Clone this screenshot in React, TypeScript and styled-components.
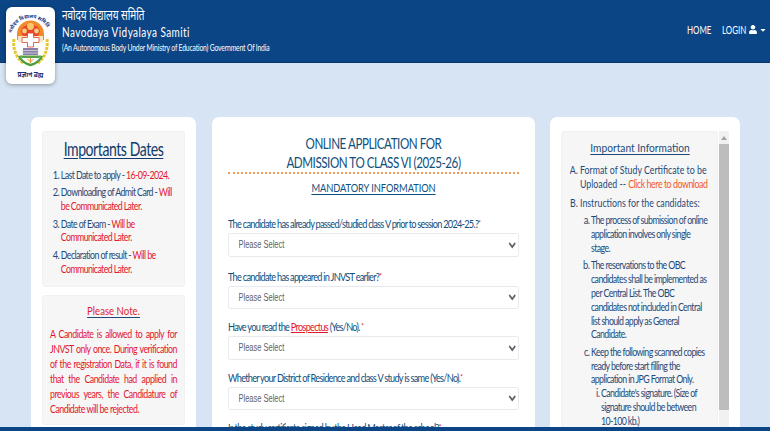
import React from "react";
import styled, { createGlobalStyle, css } from "styled-components";
import { FaUser, FaCaretDown } from "react-icons/fa";

const GlobalStyle = createGlobalStyle`
  html, body {
    margin: 0;
    padding: 0;
    height: 100%;
    overflow: hidden;
    background: #d6e4f3;
    font-family: Lato, "Noto Sans", sans-serif;
  }
  * { box-sizing: border-box; }
`;

// the site's type is narrow and tall, so text blocks get squeezed horizontally
const squeeze = (k: number) => css`
  width: ${100 / k}%;
  transform: scaleX(${k});
  transform-origin: left center;
`;

const Page = styled.div`
  height: 100vh;
  overflow: hidden;
`;

const Header = styled.header`
  height: 63px;
  background: #0b4585;
  border-bottom: 1px solid #083766;
  display: flex;
  justify-content: space-between;
  padding: 0 4px 0 62px;
  color: #fff;
`;

const LogoCard = styled.div`
  position: absolute;
  left: 6px;
  top: 7px;
  width: 49px;
  height: 77px;
  background: #fff;
  border-radius: 6px;
  box-shadow: 0 1px 4px rgba(0, 0, 0, 0.35);
`;

const Brand = styled.div`
  display: flex;
  flex-direction: column;
  padding-top: 5px;
  white-space: nowrap;
`;

const BrandHindi = styled.div`
  font-family: "Noto Sans", "Noto Sans Devanagari", sans-serif;
  font-size: 15px;
  line-height: 18px;
  transform: scaleX(0.66);
  transform-origin: left center;
`;

const BrandName = styled.div`
  font-size: 13px;
  line-height: 18px;
  letter-spacing: 0.55px;
  transform: scaleX(0.77);
  transform-origin: left center;
`;

const BrandSub = styled.div`
  font-size: 9px;
  line-height: 14px;
  letter-spacing: -0.2px;
  transform: scaleX(0.75);
  transform-origin: left center;
`;

const Nav = styled.nav`
  display: flex;
  align-items: center;
  gap: 11px;
  padding-bottom: 3px;
  font-size: 12px;
`;

const NavLink = styled.a`
  display: flex;
  align-items: center;
  gap: 3px;
  color: #fff;
`;

const NavText = styled.span`
  display: block;
  width: 24px;
  white-space: nowrap;
  transform: scaleX(0.66);
  transform-origin: left center;
`;

const UserIcon = styled(FaUser)`
  width: 8px;
  height: 11px;
`;

const CaretIcon = styled(FaCaretDown)`
  width: 6px;
  height: 8px;
`;

const Main = styled.main`
  display: grid;
  grid-template-columns: 165px 323px 190px;
  column-gap: 15.5px;
  padding: 54px 30px 0 31px;
  align-items: start;
`;

const Card = styled.section`
  background: #fff;
  border-radius: 7px;
  padding: 14px 11px;
  height: 400px;
`;

const FormCard = styled(Card)`
  padding: 14px 16px;
`;

const InfoCard = styled(Card)`
  display: flex;
  gap: 1px;
`;

const Panel = styled.div`
  background: #f6f6f7;
  border: 1px solid #f1f1f2;
  border-radius: 3px;
  color: #1f4a78;
  overflow: hidden;
`;

const DatesPanel = styled(Panel)`
  height: 156px;
  margin-bottom: 8px;
  padding: 5px 7px;
`;

const NotePanel = styled(Panel)`
  height: 130px;
  padding: 6px 7px;
`;

const InfoPanel = styled(Panel)`
  flex: 1;
  height: 400px;
  padding: 8px 7px 8px 8px;
`;

const BigTitle = styled.h2`
  ${squeeze(0.74)}
  margin: 0 0 7px;
  text-align: center;
  font-size: 19px;
  line-height: 24px;
  font-weight: 400;
  letter-spacing: -0.6px;
  color: #123b6b;
  text-decoration: underline;
  text-decoration-thickness: 1px;
  text-underline-offset: 2px;
`;

const NoteTitle = styled.h3`
  ${squeeze(0.8)}
  margin: 0 0 6px;
  text-align: center;
  font-size: 12px;
  line-height: 18px;
  font-weight: 400;
  color: #e01e2d;
  text-decoration: underline;
  text-decoration-color: #1f4a78;
  text-underline-offset: 2px;
`;

const InfoTitle = styled.h3`
  ${squeeze(0.85)}
  margin: 0 0 7px;
  text-align: center;
  font-size: 12px;
  line-height: 16px;
  font-weight: 400;
  color: #1f4a78;
  text-decoration: underline;
  text-underline-offset: 2px;
`;

const Squeezed = styled.div`
  ${squeeze(0.8)}
`;

const OrderedList = styled.ol<{
  $type?: string;
  $indent?: number;
  $tight?: boolean;
  $gap?: number;
  $top?: number;
}>`
  list-style-type: ${({ $type }) => $type || "decimal"};
  margin: ${({ $top }) => $top ?? 0}px 0 0;
  padding-left: ${({ $indent }) => $indent ?? 12.5}px;
  font-size: 11px;
  line-height: 13.8px;
  letter-spacing: ${({ $tight }) => ($tight ? "-0.75px" : "0")};

  & > li {
    margin-bottom: ${({ $gap }) => $gap ?? 3.6}px;
  }

  & > li::marker {
    font-size: ${({ $tight }) => ($tight ? "11.5px" : "11px")};
  }
`;

const Red = styled.span`
  color: #e4162b;
`;

const Orange = styled.span`
  color: #ef5a24;
  letter-spacing: -0.55px;
`;

const NoBreak = styled.span`
  white-space: nowrap;
`;

const NoteText = styled.p`
  ${squeeze(0.8)}
  margin: 0;
  color: #e4162b;
  font-size: 11px;
  line-height: 15.1px;
  letter-spacing: -0.6px;
  text-align: justify;
`;

const ScrollTrack = styled.div`
  flex: 0 0 10px;
  height: 400px;
  background: #f1f1f1;
  display: flex;
  flex-direction: column;
  align-items: center;
`;

const ScrollArrow = styled.div`
  height: 13px;
  display: flex;
  align-items: center;
  &::before {
    content: "";
    border: 3px solid transparent;
    border-top: 0;
    border-bottom: 4px solid #a3a3a3;
  }
`;

const ScrollThumb = styled.div`
  width: 100%;
  height: 266px;
  background: #bdbdbd;
`;

const FormHead = styled.div`
  padding: 3px 0 0;
  border-bottom: 2px dotted #f0995a;
`;

const FormTitle = styled.h1`
  ${squeeze(0.75)}
  margin: 0;
  text-align: center;
  font-size: 15.5px;
  line-height: 19px;
  font-weight: 400;
  letter-spacing: -0.6px;
  color: #0f4f7d;
`;

const FormSubtitle = styled.h2`
  ${squeeze(0.81)}
  margin: 6px 0 20px;
  text-align: center;
  font-size: 11.5px;
  line-height: 16px;
  font-weight: 400;
  letter-spacing: -0.1px;
  color: #0f4f7d;
  text-decoration: underline;
  text-underline-offset: 2px;
`;

const Field = styled.div<{ $first?: boolean }>`
  margin-bottom: ${({ $first }) => ($first ? 12 : 10)}px;
`;

const Label = styled.label`
  ${squeeze(0.8)}
  display: block;
  height: 17px;
  font-size: 11.5px;
  line-height: 15px;
  letter-spacing: -0.92px;
  color: #0f4f7d;
`;

const Star = styled.span`
  color: #e4162b;
  font-size: 8px;
  vertical-align: 2px;
  line-height: 0;
`;

const ProspectusLink = styled.a`
  color: #e4162b;
  text-decoration: underline;
`;

const Select = styled.select`
  ${squeeze(0.75)}
  display: block;
  height: 23.5px;
  padding: 0 4px 0 9px;
  background: #fff;
  border: 1px solid #e3e6ea;
  border-radius: 3px;
  font-family: "Liberation Sans", Arial, sans-serif;
  font-size: 10px;
  color: #5d6268;
`;

const FooterBar = styled.div`
  position: fixed;
  left: 0;
  right: 0;
  bottom: 0;
  height: 4px;
  background: #0b4585;
`;

const Logo = () => (
  <svg width="49" height="77" viewBox="0 0 49 77">
    <defs>
      <path id="logo-arc" d="M5.5 30 A19 19 0 0 1 43.5 30" />
    </defs>
    <text fontSize="5" fill="#1b2f7a" fontFamily="Noto Sans, sans-serif" fontWeight="700">
      <textPath href="#logo-arc" startOffset="4">नवोदय विद्यालय समिति</textPath>
    </text>
    <path d="M11 33v-6a13.5 13.5 0 0 1 27 0v6z" fill="#f08a2a" />
    <path d="M15 24a10 9 0 0 1 19 0l-2 5H17z" fill="#e8452c" />
    <circle cx="24.5" cy="19.5" r="3.4" fill="#f9c86a" />
    <circle cx="18.5" cy="24" r="2.4" fill="#f6cf80" />
    <circle cx="30.5" cy="24" r="2.4" fill="#f6cf80" />
    <rect x="12" y="29" width="25" height="6" fill="#f7e7c4" />
    <path d="M21.5 26h6v4.5H33v5h-5.5V40h-6v-4.5H16v-5h5.5z" fill="#fff" stroke="#d9432c" strokeWidth="0.8" />
    <rect x="17" y="41" width="15" height="7" fill="#8a7fa6" />
    <path d="M16 43.5h17M16 46h17" stroke="#d9d4e4" strokeWidth="0.8" />
    <path d="M14 48.5h21l-2 2.5H16z" fill="#5aa24a" />
    <path d="M8 32c-1 9 1 17 9 24" fill="none" stroke="#e6c62e" strokeWidth="3" strokeDasharray="3 1" />
    <path d="M41 32c1 9-1 17-9 24" fill="none" stroke="#e6c62e" strokeWidth="3" strokeDasharray="3 1" />
    <path d="M13 49c3 6 7 8 11.5 9 4.5-1 8.5-3 11.5-9" fill="none" stroke="#4f9d3f" strokeWidth="2.4" />
    <path d="M24.5 51v5M21.5 52l3 3 3-3" fill="none" stroke="#e89a2c" strokeWidth="1" />
    <text x="24.5" y="70" textAnchor="middle" fontSize="6.5" fontWeight="700" fill="#1b2f7a" fontFamily="Noto Sans, sans-serif">प्रज्ञानं ब्रह्म</text>
  </svg>
);

const questions = [
  <>The candidate has already passed/studied class V prior to session 2024-25.?<Star>*</Star></>,
  <>The candidate has appeared in JNVST earlier?<Star>*</Star></>,
  <>Have you read the <ProspectusLink>Prospectus</ProspectusLink> (Yes/No). <Star>*</Star></>,
  <>Whether your District of Residence and class V study is same (Yes/No).<Star>*</Star></>,
];

const App = () => {
  return (
    <Page>
      <GlobalStyle />
      <Header>
        <Brand>
          <BrandHindi>नवोदय विद्यालय समिति</BrandHindi>
          <BrandName>Navodaya Vidyalaya Samiti</BrandName>
          <BrandSub>(An Autonomous Body Under Ministry of Education) Government Of India</BrandSub>
        </Brand>
        <Nav>
          <NavLink><NavText>HOME</NavText></NavLink>
          <NavLink>
            <NavText>LOGIN</NavText>
            <UserIcon />
            <CaretIcon />
          </NavLink>
        </Nav>
      </Header>
      <LogoCard>
        <Logo />
      </LogoCard>
      <Main>
        <Card>
          <DatesPanel>
            <BigTitle>Importants Dates</BigTitle>
            <Squeezed>
              <OrderedList $tight $indent={13.5}>
                <li>Last Date to apply - <Red>16-09-2024.</Red></li>
                <li>Downloading of Admit Card - <Red>Will be Communicated Later.</Red></li>
                <li>Date of Exam - <Red>Will be Communicated Later.</Red></li>
                <li>Declaration of result - <Red>Will be Communicated Later.</Red></li>
              </OrderedList>
            </Squeezed>
          </DatesPanel>
          <NotePanel>
            <NoteTitle>Please Note.</NoteTitle>
            <NoteText>
              A Candidate is allowed to apply for JNVST only once. During verification of the
              registration Data, if it is found that the Candidate had applied in previous years,
              the Candidature of Candidate will be rejected.
            </NoteText>
          </NotePanel>
        </Card>
        <FormCard>
          <FormHead>
            <FormTitle>
              ONLINE APPLICATION FOR
              <br />
              ADMISSION TO CLASS VI (2025-26)
            </FormTitle>
          </FormHead>
          <FormSubtitle>MANDATORY INFORMATION</FormSubtitle>
          {questions.map((question, index) => (
            <Field key={index} $first={index === 0}>
              <Label>{question}</Label>
              <Select defaultValue="">
                <option value="">Please Select</option>
                <option value="yes">Yes</option>
                <option value="no">No</option>
              </Select>
            </Field>
          ))}
          <Field>
            <Label>Is the study certificate signed by the Head Master of the school?<Star>*</Star></Label>
          </Field>
        </FormCard>
        <InfoCard>
          <InfoPanel>
            <InfoTitle>Important Information</InfoTitle>
            <Squeezed>
              <OrderedList $type="upper-alpha" $gap={5}>
                <li>
                  Format of Study Certificate to be Uploaded -- <Orange>Click here to download</Orange>
                </li>
                <li>
                  Instructions for the candidates:
                  <OrderedList $type="lower-alpha" $indent={13.75} $tight $top={4}>
                    <li>The process of submission of online application involves only single<br />stage.</li>
                    <li>
                      The reservations to the OBC candidates shall be implemented as per Central
                      List. The OBC candidates not included in Central list should apply as General
                      Candidate.
                    </li>
                    <li>
                      Keep the following scanned copies ready before start filling the application
                      in JPG Format Only.
                      <OrderedList $type="lower-roman" $tight>
                        <li>Candidate's signature. (Size of signature should be between <NoBreak>10-100 kb.)</NoBreak></li>
                      </OrderedList>
                    </li>
                  </OrderedList>
                </li>
              </OrderedList>
            </Squeezed>
          </InfoPanel>
          <ScrollTrack>
            <ScrollArrow />
            <ScrollThumb />
          </ScrollTrack>
        </InfoCard>
      </Main>
      <FooterBar />
    </Page>
  );
};

export default App;
